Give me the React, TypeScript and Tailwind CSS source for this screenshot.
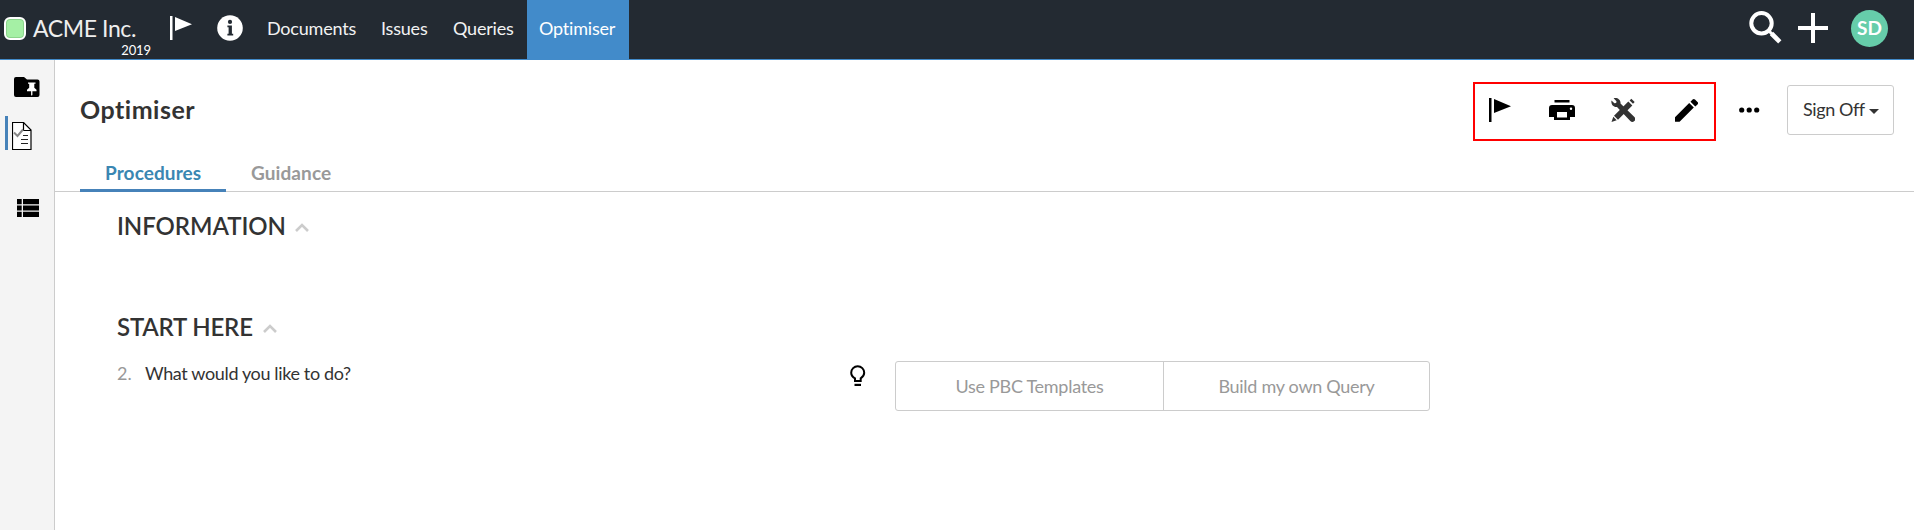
import React from "react";

function Flag({ className }: { className?: string }) {
  return (
    <svg viewBox="0 0 22 24" className={className} fill="currentColor">
      <path d="M0 0h2.5v24H0zM5 1l17 7.3L5 15z" />
    </svg>
  );
}

function Chevron() {
  return (
    <svg viewBox="0 0 14 9" className="mt-[2px] h-[9px] w-[14px]" fill="none" stroke="#ccc" strokeWidth="2.6">
      <path d="M1 8l6-6 6 6" />
    </svg>
  );
}

function Header() {
  return (
    <header className="flex h-[60px] border-b border-[#428bca] bg-[#232a32] text-white">
      <div className="flex w-[166px] pl-1 pt-[17px]">
        <div className="h-[23px] w-[22px] rounded-[6px] border-2 border-white bg-[#a5f0a5] shadow-[inset_0_0_0_1px_#8cd48c]" />
        <div className="ml-[7px] w-[118px]">
          <div className="-mt-[4px] text-[23px] leading-[30px] tracking-[-0.4px] whitespace-nowrap text-[#eee]">ACME Inc.</div>
          <div className="-mt-[2px] text-right text-[13px] leading-[18px] tracking-[-0.1px]">2019</div>
        </div>
      </div>
      <Flag className="ml-[4px] mt-[16px] h-6 w-[22px]" />
      <svg viewBox="0 0 26 26" className="ml-[25px] mt-[15px] h-[26px] w-[26px]">
        <circle cx="13" cy="13" r="12.8" fill="#fff" />
        <circle cx="13" cy="6.9" r="2.1" fill="#232a32" />
        <path d="M10.4 10.5h4.5v8.2h1.3v1.8h-5.8v-1.8h1.2v-6.4h-1.2z" fill="#232a32" />
      </svg>
      <nav className="ml-[11px] flex h-[60px] text-[18px] leading-[57px] tracking-[-0.2px] text-[#f2f2f2]">
        <a className="w-[114px] pl-[13px]">Documents</a>
        <a className="w-[72px] pl-[13px]">Issues</a>
        <a className="w-[87px] pl-[13px]">Queries</a>
        <a className="w-[102px] bg-[#428bca] pl-[12px] text-white">Optimiser</a>
      </nav>
      <div className="ml-auto flex pr-[26px]">
        <svg viewBox="0 0 33 33" className="mt-[11px] h-[33px] w-[33px]" fill="none" stroke="#fff">
          <circle cx="12.5" cy="12.3" r="10.2" strokeWidth="4" />
          <path d="M20 20l3.5 3.5" strokeWidth="3" />
          <path d="M22.5 22.5l8.3 8.3" strokeWidth="4.6" />
        </svg>
        <svg viewBox="0 0 30 30" className="ml-[16px] mt-[13px] h-[30px] w-[30px]" fill="#fff">
          <path d="M13 0h4v13h13v4H17v13h-4V17H0v-4h13z" />
        </svg>
        <div className="ml-[23px] mt-[10px] h-[37px] w-[37px] rounded-full bg-[#66cdaa] text-center text-[19px] leading-[36px] font-bold">
          SD
        </div>
      </div>
    </header>
  );
}

function Sidebar() {
  return (
    <aside className="flex w-[55px] shrink-0 flex-col border-r border-[#ccc] bg-[#f4f4f4]">
      <svg viewBox="0 0 26 20" className="ml-[14px] mt-[17px] h-5 w-[26px]">
        <path d="M2 0h8l3 2.5h10.5a2 2 0 0 1 2 2V18a2 2 0 0 1-2 2H2a2 2 0 0 1-2-2V2a2 2 0 0 1 2-2z" />
        <path d="M14 5.5h7.5v1.3h-1.2v4l2.2 2v1.4h-4.1V18l-.7.8-.6-.8v-3.8H13v-1.4l2.2-2v-4H14z" fill="#fff" />
      </svg>
      <div className="mt-[19px] flex h-[34px] pl-[5px]">
        <div className="w-[3px] bg-[#4682b9]" />
        <svg viewBox="0 0 20 28" className="ml-[4px] mt-[6px] h-[28px] w-5" fill="none">
          <path d="M.5 .5h11l7.500 7.500v19.500H.5z" fill="#fff" stroke="#000" strokeWidth="1.2" />
          <path d="M11.500 .5v8h7.500" stroke="#000" strokeWidth="1.2" />
          <path d="M2 10.500l3.500 3.500 5.500-6.500" stroke="#888" strokeWidth="2" />
          <path d="M11 13.500h5M9 17.500h7M9 21.500h7" stroke="#222" strokeWidth="1.2" />
        </svg>
      </div>
      <svg viewBox="0 0 22 18" className="ml-[17px] mt-[49px] h-[18px] w-[22px]">
        <path d="M0 0h4.7v5.2H0zM6 0h16v5.2H6zM0 6.4h4.7v5.2H0zM6 6.4h16v5.2H6zM0 12.8h4.7V18H0zM6 12.8h16V18H6z" />
      </svg>
    </aside>
  );
}

function TitleBar() {
  return (
    <div className="flex h-[96px] items-start pl-[25px] pr-[20px]">
      <h1 className="mt-[34px] text-[25px] leading-[30px] font-bold tracking-[0.5px] text-[#333]">Optimiser</h1>
      <div className="ml-auto mt-[22px] flex h-[59px] w-[243px] border-2 border-[#f00] pl-[14px] pt-[14px] text-black">
        <Flag className="h-6 w-[22px]" />
        <svg viewBox="0 0 26 20" className="ml-[38px] mt-[2px] h-5 w-[26px]">
          <path d="M5.5 0h15v2.5h-15z" />
          <path d="M3 5h20a3 3 0 0 1 3 3v9h-5v3H5v-3H0V8a3 3 0 0 1 3-3z" />
          <path d="M8 12h10v5.5H8z" fill="#fff" />
          <circle cx="22" cy="8.7" r="1.2" fill="#fff" />
        </svg>
        <svg viewBox="0 0 24 24" className="ml-[36px] h-6 w-6" fill="#333">
          <path d="M2.600 .3L5.500 3.200 5.200 5 3.400 5.300 .5 2.500C-.3 6 2.300 9.600 6 9L19.300 23a2.900 2.900 0 0 0 4.100-4.100L9.500 5.500C10 2 6.500-.8 2.600 .3z" />
          <path d="M17.300 3.400l4 4L7 21.700l-4-4z" />
          <path d="M18.600 2.400L20.300.7l3.400 3.400L22 5.800zM2.300 18.800l3.400 3.400L.5 24z" />
        </svg>
        <svg viewBox="0 0 23 23" className="ml-[40px] mt-[1px] h-[23px] w-[23px]">
          <path d="M0 18.2L14.2 4l4.6 4.6L4.6 22.8H0zM15.5 2.7L17.6.6a1.7 1.7 0 0 1 2.4 0l2.5 2.5a1.7 1.7 0 0 1 0 2.4l-2.2 2z" />
        </svg>
      </div>
      <svg viewBox="0 0 21 6" className="ml-[23px] mt-[47px] h-[6px] w-[21px]">
        <circle cx="2.7" cy="3" r="2.6" />
        <circle cx="10.2" cy="3" r="2.6" />
        <circle cx="17.7" cy="3" r="2.6" />
      </svg>
      <button className="ml-[27px] mt-[25px] flex h-[50px] w-[107px] items-center rounded-[3px] border border-[#ccc] pl-[15px] pb-[2px] text-[18px] tracking-[-0.4px] text-[#333]">
        Sign Off
        <svg viewBox="0 0 10 5" className="ml-[4px] mt-[4px] h-[5px] w-[10px]" fill="#333">
          <path d="M0 0h10L5 5z" />
        </svg>
      </button>
    </div>
  );
}

export default function App() {
  return (
    <div className="flex h-[530px] w-[1914px] flex-col overflow-hidden bg-white font-['Lato',sans-serif]">
      <Header />
      <div className="flex flex-1">
        <Sidebar />
        <main className="flex-1">
          <TitleBar />
          <div className="flex h-[36px] border-b border-[#ccc] pl-[25px] text-[19px] leading-[34px] font-bold">
            <div className="h-[36px] w-[146px] border-b-[3px] border-[#4682b9] pl-[25px] tracking-[0.1px] text-[#3a87b2]">Procedures</div>
            <div className="ml-[25px] tracking-[0.1px] text-[#999]">Guidance</div>
          </div>
          <section className="pl-[62px] text-[#333]">
            <h2 className="mt-[19px] flex h-[30px] items-center gap-[9px] text-[24px] leading-[30px] font-semibold tracking-[-0.05px]">
              INFORMATION <Chevron />
            </h2>
            <h2 className="mt-[71px] flex h-[30px] items-center gap-[10px] text-[24px] leading-[30px] font-semibold tracking-[-0.2px]">
              START HERE <Chevron />
            </h2>
            <div className="mt-[19px] flex text-[18px] leading-[24px]">
              <span className="w-[28px] text-[#999]">2.</span>
              <span className="w-[705px] tracking-[-0.36px]">What would you like to do?</span>
              <svg viewBox="0 0 16 22" className="mt-[4px] h-[22px] w-4" fill="none" stroke="#000" strokeWidth="2">
                <path d="M5 16v-2.7C2.700 12 1.200 10 1.200 7.700a6.500 6.500 0 0 1 13 0c0 2.300-1.500 4.300-3.500 5.600V16z" />
                <path d="M4.500 19.900h6.500" strokeWidth="2.200" />
              </svg>
              <div className="ml-[29px] flex h-[50px] w-[535px] rounded-[3px] border border-[#ccc] text-center leading-[49px] tracking-[-0.28px] text-[#999]">
                <div className="w-[268px] border-r border-[#ccc]">Use PBC Templates</div>
                <div className="flex-1">Build my own Query</div>
              </div>
            </div>
          </section>
        </main>
      </div>
    </div>
  );
}
